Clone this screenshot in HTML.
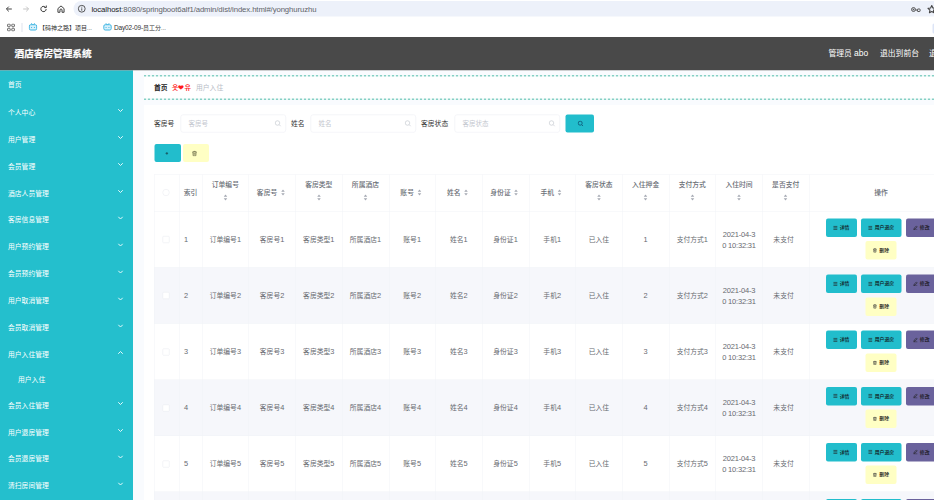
<!DOCTYPE html>
<html lang="zh-CN">
<head>
<meta charset="utf-8">
<title>酒店客房管理系统</title>
<style>
*{box-sizing:border-box;margin:0;padding:0}
html,body{width:934px;height:500px;overflow:hidden;background:#fff}
body{font-family:"Liberation Sans","Noto Sans CJK SC",sans-serif;color:#333}
#stage{position:absolute;left:0;top:0;width:1868px;height:1000px;transform:scale(.5);transform-origin:0 0;overflow:hidden;background:#fff}
.abs{position:absolute}
#pill{left:147px;top:2px;width:1800px;height:30.800px;border-radius:16px;background:#edf1fa}
#url{left:183px;top:4px;font-size:15.5px;line-height:28px;color:#5f6368;letter-spacing:-.2px;white-space:nowrap}
#url b{font-weight:normal;color:#202124}
.bm{font-size:12px;line-height:20px;color:#333;white-space:nowrap}
#hdr{left:0;top:73.600px;width:1868px;height:67.700px;background:#494949}
#title{left:29px;top:0;line-height:67.500px;font-size:19.3px;font-weight:bold;-webkit-text-stroke:.45px #fff;color:#fff;white-space:nowrap}
.hr{top:0;line-height:66.500px;font-size:15.6px;color:#fff;white-space:nowrap}
#side{left:0;top:141.300px;width:266px;height:860px;background:#24bfcd}
.mi{position:absolute;left:16px;font-size:13.6px;line-height:20px;color:#fff;white-space:nowrap}
.ar{position:absolute;left:235px;width:12px;height:8px}
#main{left:266px;top:141.300px;width:1602px;height:860px;background:#f9fbfe}
#card{left:288px;top:210px;width:1580px;height:800px;background:#fff}
#crumb{left:288px;top:150.300px;width:1580px;height:49.500px;background:#fff}
.dash{left:288px;width:1580px;height:2.600px;background:repeating-linear-gradient(90deg,#86d0c5 0,#86d0c5 3.500px,#e9f7f5 4.500px,#e9f7f5 7px,#86d0c5 8px)}
.bc{top:166px;font-size:13.6px;line-height:18px;white-space:nowrap}
.lbl{top:236px;font-size:13.6px;line-height:22px;color:#333;white-space:nowrap}
.inp{top:229px;height:36px;border:1px solid #eaecf2;border-radius:5px;background:#fff}
.inp span{position:absolute;left:15px;top:7px;font-size:13px;line-height:20px;color:#c4c7cf;white-space:nowrap}
.inp svg{position:absolute;right:8.500px;top:10px}
.btn{border-radius:4px;text-align:center;font-size:9.7px;font-weight:500;color:#111;white-space:nowrap}
.ic{display:inline-block;vertical-align:-2.300px;margin-right:4px;line-height:0}
.ic svg{display:block}
.th{font-size:13.6px;font-weight:500;color:#6a6e76;line-height:22px;text-align:center;white-space:nowrap}
.td i{font-style:normal;font-size:14.800px;line-height:1}
.td{font-size:13.6px;color:#676a70;line-height:22px;text-align:center;white-space:nowrap}
#vlx{} .vl{width:1px;background:#f1f3f7;top:349px;height:660px}
.hl{height:1px;background:#f1f3f7;left:308px;width:1560px}
.cb{width:14px;height:14px;border:1px solid #e6e8ee;border-radius:2px;background:#fff}
.cr{width:10px;height:16px}
</style>
</head>
<body>
<div id="stage">
  <div id="pill" class="abs"></div>
  <div id="url" class="abs"><b>localhost</b>:8080/springboot6alf1/admin/dist/index.html#/yonghuruzhu</div>
  <svg class="abs" style="left:10px;top:10px" width="16" height="16" viewBox="0 0 20 20" fill="none" stroke="#3c3c3c" stroke-width="2.400"><path d="M17 10H4M9.500 4L3.500 10l6 6"/></svg>
  <svg class="abs" style="left:44px;top:10px" width="16" height="16" viewBox="0 0 20 20" fill="none" stroke="#c2c2c2" stroke-width="2.400"><path d="M3 10h13M10.500 4l6 6-6 6"/></svg>
  <svg class="abs" style="left:78px;top:9px" width="18" height="18" viewBox="0 0 22 22" fill="none" stroke="#3c3c3c" stroke-width="2.400"><path d="M17.500 11a6.500 6.500 0 1 1-2-4.700"/><path d="M17.800 2.500v5h-5"/></svg>
  <svg class="abs" style="left:113px;top:9px" width="18" height="18" viewBox="0 0 22 22" fill="none" stroke="#3c3c3c" stroke-width="2.400"><path d="M3.500 10l7.500-6.500 7.500 6.500v9h-5v-5.500a2.500 2.500 0 0 0-5 0V19h-5z"/></svg>
  <svg class="abs" style="left:155px;top:9px" width="17" height="17" viewBox="0 0 20 20" fill="none" stroke="#3c3c3c" stroke-width="2"><circle cx="10" cy="10" r="8"/><path d="M10 9v5.500M10 5.300v1.900"/></svg>
  <svg class="abs" style="left:1822px;top:12px" width="20" height="14" viewBox="0 0 20 14" fill="none" stroke="#444" stroke-width="1.800"><circle cx="5" cy="7" r="3.900"/><circle cx="5" cy="7" r=".9" fill="#444"/><path d="M9 8h4"/><rect x="12.800" y="6" width="5.400" height="5" rx="1.200"/></svg>
  <svg class="abs" style="left:1853px;top:8px" width="21" height="21" viewBox="0 0 24 24" fill="none" stroke="#444" stroke-width="2.500" stroke-linejoin="round"><path d="M12 3.500l2.600 5.500 6 .8-4.400 4.200 1.100 6L12 17.100 6.700 20l1.100-6L3.400 9.800l6-.8z"/></svg>
  <div class="abs" style="left:1865px;top:47px;width:4px;height:20px;background:#dde5f7;border-radius:3px 0 0 3px"></div>
  <svg class="abs" style="left:14px;top:46.500px" width="16" height="16" viewBox="0 0 16 16" fill="none" stroke="#4a4a4a" stroke-width="1.700"><rect x="1.200" y="1.200" width="5.200" height="5.200" rx="1.300"/><rect x="9.600" y="1.200" width="5.200" height="5.200" rx="1.300"/><rect x="1.200" y="9.600" width="5.200" height="5.200" rx="1.300"/><rect x="9.600" y="9.600" width="5.200" height="5.200" rx="1.300"/></svg>
  <div class="abs" style="left:43px;top:46px;width:1.500px;height:18px;background:#dfe3ee"></div>
  <svg class="abs" style="left:57px;top:45px" width="18" height="17" viewBox="0 0 22 20" fill="#d8f1fb" stroke="#3db4e2" stroke-width="2.400"><rect x="2" y="5" width="18" height="13" rx="3.500"/><path d="M7 1.500l2.500 3M15 1.500l-2.500 3M7.500 10.500v2.500M14.500 10.500v2.500" fill="none"/></svg>
  <div class="abs bm" style="left:78px;top:45px">【码神之路】项目...</div>
  <svg class="abs" style="left:206px;top:45px" width="18" height="17" viewBox="0 0 22 20" fill="#d8f1fb" stroke="#3db4e2" stroke-width="2.400"><rect x="2" y="5" width="18" height="13" rx="3.500"/><path d="M7 1.500l2.500 3M15 1.500l-2.500 3M7.500 10.500v2.500M14.500 10.500v2.500" fill="none"/></svg>
  <div class="abs bm" style="left:228px;top:45px"><span style="font-size:13px;letter-spacing:-.3px">Day02-09-</span>员工分...</div>
  <div id="hdr" class="abs">
    <div id="title" class="abs">酒店客房管理系统</div>
    <div class="abs hr" style="left:1657px">管理员 <span style="font-size:17px">abo</span></div>
    <div class="abs hr" style="left:1760px">退出到前台</div>
    <div class="abs hr" style="left:1858px">退出登录</div>
  </div>
  <div id="main" class="abs"></div>
  <div id="card" class="abs"></div>
  <div id="side" class="abs">
    <div class="mi" style="top:18.9px">首页</div>
    <div class="mi" style="top:74.0px">个人中心</div>
    <svg class="ar" style="top:76.0px" viewBox="0 0 12 8" fill="none" stroke="#e4f9fb" stroke-width="2"><path d="M1.500 1.500l4.500 4.500 4.500-4.500"/></svg>
    <div class="mi" style="top:127.8px">用户管理</div>
    <svg class="ar" style="top:129.8px" viewBox="0 0 12 8" fill="none" stroke="#e4f9fb" stroke-width="2"><path d="M1.500 1.500l4.500 4.500 4.500-4.500"/></svg>
    <div class="mi" style="top:181.6px">会员管理</div>
    <svg class="ar" style="top:183.6px" viewBox="0 0 12 8" fill="none" stroke="#e4f9fb" stroke-width="2"><path d="M1.500 1.500l4.500 4.500 4.500-4.500"/></svg>
    <div class="mi" style="top:235.4px">酒店人员管理</div>
    <svg class="ar" style="top:237.4px" viewBox="0 0 12 8" fill="none" stroke="#e4f9fb" stroke-width="2"><path d="M1.500 1.500l4.500 4.500 4.500-4.500"/></svg>
    <div class="mi" style="top:289.2px">客房信息管理</div>
    <svg class="ar" style="top:291.2px" viewBox="0 0 12 8" fill="none" stroke="#e4f9fb" stroke-width="2"><path d="M1.500 1.500l4.500 4.500 4.500-4.500"/></svg>
    <div class="mi" style="top:343.0px">用户预约管理</div>
    <svg class="ar" style="top:345.0px" viewBox="0 0 12 8" fill="none" stroke="#e4f9fb" stroke-width="2"><path d="M1.500 1.500l4.500 4.500 4.500-4.500"/></svg>
    <div class="mi" style="top:396.8px">会员预约管理</div>
    <svg class="ar" style="top:398.8px" viewBox="0 0 12 8" fill="none" stroke="#e4f9fb" stroke-width="2"><path d="M1.500 1.500l4.500 4.500 4.500-4.500"/></svg>
    <div class="mi" style="top:450.6px">用户取消管理</div>
    <svg class="ar" style="top:452.6px" viewBox="0 0 12 8" fill="none" stroke="#e4f9fb" stroke-width="2"><path d="M1.500 1.500l4.500 4.500 4.500-4.500"/></svg>
    <div class="mi" style="top:504.4px">会员取消管理</div>
    <svg class="ar" style="top:506.4px" viewBox="0 0 12 8" fill="none" stroke="#e4f9fb" stroke-width="2"><path d="M1.500 1.500l4.500 4.500 4.500-4.500"/></svg>
    <div class="mi" style="top:558.2px">用户入住管理</div>
    <svg class="ar" style="top:560.2px" viewBox="0 0 12 8" fill="none" stroke="#e4f9fb" stroke-width="2"><path d="M1.500 6.500l4.500-4.500 4.500 4.500"/></svg>
    <div class="mi" style="top:659.7px">会员入住管理</div>
    <svg class="ar" style="top:661.7px" viewBox="0 0 12 8" fill="none" stroke="#e4f9fb" stroke-width="2"><path d="M1.500 1.500l4.500 4.500 4.500-4.500"/></svg>
    <div class="mi" style="top:713.4px">用户退房管理</div>
    <svg class="ar" style="top:715.4px" viewBox="0 0 12 8" fill="none" stroke="#e4f9fb" stroke-width="2"><path d="M1.500 1.500l4.500 4.500 4.500-4.500"/></svg>
    <div class="mi" style="top:767.1px">会员退房管理</div>
    <svg class="ar" style="top:769.1px" viewBox="0 0 12 8" fill="none" stroke="#e4f9fb" stroke-width="2"><path d="M1.500 1.500l4.500 4.500 4.500-4.500"/></svg>
    <div class="mi" style="top:820.8px">清扫房间管理</div>
    <svg class="ar" style="top:822.8px" viewBox="0 0 12 8" fill="none" stroke="#e4f9fb" stroke-width="2"><path d="M1.500 1.500l4.500 4.500 4.500-4.500"/></svg>
    <div class="mi" style="left:36px;top:607.3px">用户入住</div>
  </div>
  <div id="crumb" class="abs"></div>
  <div class="abs dash" style="top:150.300px"></div>
  <div class="abs dash" style="top:197.200px"></div>
  <div class="abs bc" style="left:308px;color:#222;font-weight:bold">首页</div>
  <div class="abs bc" style="left:344px;color:#ff1a1a;font-family:'Liberation Sans','NanumGothic','Noto Sans CJK KR',sans-serif;font-weight:bold">웃❤유</div>
  <div class="abs bc" style="left:392px;color:#b8bcc6">用户入住</div>
  <div class="abs lbl" style="left:308px">客房号</div>
  <div class="abs inp" style="left:361px;width:211px"><span>客房号</span><svg width="14" height="14" viewBox="0 0 14 14" fill="none" stroke="#c0c4cc" stroke-width="1.200"><circle cx="6" cy="6" r="4.500"/><path d="M9.500 9.500l3 3"/></svg></div>
  <div class="abs lbl" style="left:582px">姓名</div>
  <div class="abs inp" style="left:621px;width:211px"><span>姓名</span><svg width="14" height="14" viewBox="0 0 14 14" fill="none" stroke="#c0c4cc" stroke-width="1.200"><circle cx="6" cy="6" r="4.500"/><path d="M9.500 9.500l3 3"/></svg></div>
  <div class="abs lbl" style="left:842px">客房状态</div>
  <div class="abs inp" style="left:909px;width:211px"><span>客房状态</span><svg width="14" height="14" viewBox="0 0 14 14" fill="none" stroke="#c0c4cc" stroke-width="1.200"><circle cx="6" cy="6" r="4.500"/><path d="M9.500 9.500l3 3"/></svg></div>
  <div class="abs btn" style="left:1131px;top:229px;width:57px;height:36px;background:#22bdcc"><div class="abs" style="left:23.500px;top:11.500px"><svg width="12.500" height="12.500" viewBox="0 0 14 14" fill="none" stroke="#0f5878" stroke-width="1.900"><circle cx="6" cy="6" r="4.500"/><path d="M9.500 9.500l3 3"/></svg></div></div>
  <div class="abs btn" style="left:309px;top:288px;width:53px;height:36px;background:#22bdcc"><svg class="abs" style="left:20.500px;top:15px" width="7.500" height="7.500" viewBox="0 0 10 10" stroke="#17525a" stroke-width="2.200"><path d="M5 1.500v7M1.500 5h7"/></svg></div>
  <div class="abs btn" style="left:366px;top:288px;width:52px;height:36px;background:#ffffc4"><div class="abs" style="left:16.500px;top:13px"><svg width="12" height="12" viewBox="0 0 12 12" fill="none" stroke="#5c5c3a" stroke-width="1.300"><path d="M1.500 3h9M4.500 3V1.500h3V3M2.800 3l.5 7.500h5.400l.5-7.500M5 5v3.500M7 5v3.500"/></svg></div></div>
  <div class="abs" style="left:308px;top:535.2px;width:1560px;height:112.2px;background:#f6f7fb"></div>
  <div class="abs" style="left:308px;top:759.6px;width:1560px;height:112.2px;background:#f6f7fb"></div>
  <div class="abs" style="left:308px;top:984.0px;width:1560px;height:112.2px;background:#f6f7fb"></div>
  <div class="abs hl" style="top:349px"></div>
  <div class="abs hl" style="top:422.0px"></div>
  <div class="abs hl" style="top:534.2px"></div>
  <div class="abs hl" style="top:646.4px"></div>
  <div class="abs hl" style="top:758.6px"></div>
  <div class="abs hl" style="top:870.8px"></div>
  <div class="abs hl" style="top:983.0px"></div>
  <div class="abs hl" style="top:1095.2px"></div>
  <div class="abs vl" style="left:308.0px"></div>
  <div class="abs vl" style="left:358.0px"></div>
  <div class="abs vl" style="left:404.0px"></div>
  <div class="abs vl" style="left:497.4px"></div>
  <div class="abs vl" style="left:590.8px"></div>
  <div class="abs vl" style="left:684.2px"></div>
  <div class="abs vl" style="left:777.6px"></div>
  <div class="abs vl" style="left:871.0px"></div>
  <div class="abs vl" style="left:964.3px"></div>
  <div class="abs vl" style="left:1057.7px"></div>
  <div class="abs vl" style="left:1151.1px"></div>
  <div class="abs vl" style="left:1244.5px"></div>
  <div class="abs vl" style="left:1337.9px"></div>
  <div class="abs vl" style="left:1431.3px"></div>
  <div class="abs vl" style="left:1524.7px"></div>
  <div class="abs vl" style="left:1618.1px"></div>
  <div class="abs cb" style="left:325px;top:378px;border-radius:7px"></div>
  <div class="abs th" style="left:358px;width:46px;top:374.500px">索引</div>
  <div class="abs th" style="left:404px;width:93.4px;top:359px">订单编号</div>
  <div class="abs" style="left:445.7px;top:387px"><svg class="cr" viewBox="0 0 10 16" style="display:block"><path d="M5 2l3.500 4.500h-7z" fill="#a4a8b2"/><path d="M5 14l3.500-4.500h-7z" fill="#a4a8b2"/></svg></div>
  <div class="abs th" style="left:494.4px;width:93.4px;top:374px">客房号<span style="display:inline-block;width:14px"></span></div>
  <div class="abs" style="left:560.5px;top:377px"><svg class="cr" viewBox="0 0 10 16" style="display:block"><path d="M5 2l3.500 4.500h-7z" fill="#a4a8b2"/><path d="M5 14l3.500-4.500h-7z" fill="#a4a8b2"/></svg></div>
  <div class="abs th" style="left:590.8px;width:93.4px;top:359px">客房类型</div>
  <div class="abs" style="left:632.5px;top:387px"><svg class="cr" viewBox="0 0 10 16" style="display:block"><path d="M5 2l3.500 4.500h-7z" fill="#a4a8b2"/><path d="M5 14l3.500-4.500h-7z" fill="#a4a8b2"/></svg></div>
  <div class="abs th" style="left:684.2px;width:93.4px;top:359px">所属酒店</div>
  <div class="abs" style="left:725.9px;top:387px"><svg class="cr" viewBox="0 0 10 16" style="display:block"><path d="M5 2l3.500 4.500h-7z" fill="#a4a8b2"/><path d="M5 14l3.500-4.500h-7z" fill="#a4a8b2"/></svg></div>
  <div class="abs th" style="left:774.6px;width:93.4px;top:374px">账号<span style="display:inline-block;width:14px"></span></div>
  <div class="abs" style="left:833.9px;top:377px"><svg class="cr" viewBox="0 0 10 16" style="display:block"><path d="M5 2l3.500 4.500h-7z" fill="#a4a8b2"/><path d="M5 14l3.500-4.500h-7z" fill="#a4a8b2"/></svg></div>
  <div class="abs th" style="left:868.0px;width:93.4px;top:374px">姓名<span style="display:inline-block;width:14px"></span></div>
  <div class="abs" style="left:927.3px;top:377px"><svg class="cr" viewBox="0 0 10 16" style="display:block"><path d="M5 2l3.500 4.500h-7z" fill="#a4a8b2"/><path d="M5 14l3.500-4.500h-7z" fill="#a4a8b2"/></svg></div>
  <div class="abs th" style="left:961.3px;width:93.4px;top:374px">身份证<span style="display:inline-block;width:14px"></span></div>
  <div class="abs" style="left:1027.4px;top:377px"><svg class="cr" viewBox="0 0 10 16" style="display:block"><path d="M5 2l3.500 4.500h-7z" fill="#a4a8b2"/><path d="M5 14l3.500-4.500h-7z" fill="#a4a8b2"/></svg></div>
  <div class="abs th" style="left:1054.7px;width:93.4px;top:374px">手机<span style="display:inline-block;width:14px"></span></div>
  <div class="abs" style="left:1114.0px;top:377px"><svg class="cr" viewBox="0 0 10 16" style="display:block"><path d="M5 2l3.500 4.500h-7z" fill="#a4a8b2"/><path d="M5 14l3.500-4.500h-7z" fill="#a4a8b2"/></svg></div>
  <div class="abs th" style="left:1151.1px;width:93.4px;top:359px">客房状态</div>
  <div class="abs" style="left:1192.8px;top:387px"><svg class="cr" viewBox="0 0 10 16" style="display:block"><path d="M5 2l3.500 4.500h-7z" fill="#a4a8b2"/><path d="M5 14l3.500-4.500h-7z" fill="#a4a8b2"/></svg></div>
  <div class="abs th" style="left:1244.5px;width:93.4px;top:359px">入住押金</div>
  <div class="abs" style="left:1286.2px;top:387px"><svg class="cr" viewBox="0 0 10 16" style="display:block"><path d="M5 2l3.500 4.500h-7z" fill="#a4a8b2"/><path d="M5 14l3.500-4.500h-7z" fill="#a4a8b2"/></svg></div>
  <div class="abs th" style="left:1337.9px;width:93.4px;top:359px">支付方式</div>
  <div class="abs" style="left:1379.6px;top:387px"><svg class="cr" viewBox="0 0 10 16" style="display:block"><path d="M5 2l3.500 4.500h-7z" fill="#a4a8b2"/><path d="M5 14l3.500-4.500h-7z" fill="#a4a8b2"/></svg></div>
  <div class="abs th" style="left:1431.3px;width:93.4px;top:359px">入住时间</div>
  <div class="abs" style="left:1473.0px;top:387px"><svg class="cr" viewBox="0 0 10 16" style="display:block"><path d="M5 2l3.500 4.500h-7z" fill="#a4a8b2"/><path d="M5 14l3.500-4.500h-7z" fill="#a4a8b2"/></svg></div>
  <div class="abs th" style="left:1524.7px;width:93.4px;top:359px">是否支付</div>
  <div class="abs" style="left:1566.4px;top:387px"><svg class="cr" viewBox="0 0 10 16" style="display:block"><path d="M5 2l3.500 4.500h-7z" fill="#a4a8b2"/><path d="M5 14l3.500-4.500h-7z" fill="#a4a8b2"/></svg></div>
  <div class="abs th" style="left:1618px;width:288px;top:374.500px">操作</div>
  <div class="abs cb" style="left:325px;top:472.1px"></div>
  <div class="abs td" style="left:358px;width:46px;top:468.1px;text-align:left;padding-left:10px"><i>1</i></div>
  <div class="abs td" style="left:404px;width:93.400px;top:468.1px">订单编号<i>1</i></div>
  <div class="abs td" style="left:497.4px;width:93.400px;top:468.1px">客房号<i>1</i></div>
  <div class="abs td" style="left:590.8px;width:93.400px;top:468.1px">客房类型<i>1</i></div>
  <div class="abs td" style="left:684.2px;width:93.400px;top:468.1px">所属酒店<i>1</i></div>
  <div class="abs td" style="left:777.6px;width:93.400px;top:468.1px">账号<i>1</i></div>
  <div class="abs td" style="left:871.0px;width:93.400px;top:468.1px">姓名<i>1</i></div>
  <div class="abs td" style="left:964.3px;width:93.400px;top:468.1px">身份证<i>1</i></div>
  <div class="abs td" style="left:1057.7px;width:93.400px;top:468.1px">手机<i>1</i></div>
  <div class="abs td" style="left:1151.1px;width:93.400px;top:468.1px">已入住</div>
  <div class="abs td" style="left:1244.5px;width:93.400px;top:468.1px"><i>1</i></div>
  <div class="abs td" style="left:1337.9px;width:93.400px;top:468.1px">支付方式<i>1</i></div>
  <div class="abs td" style="left:1431.3px;width:93.400px;top:457.0px;line-height:21.800px;font-size:15px;letter-spacing:-.35px">2021-04-3<br>0 10:32:31</div>
  <div class="abs td" style="left:1524.7px;width:93.400px;top:468.1px;text-align:left;padding-left:22px">未支付</div>
  <div class="abs btn" style="left:1651.5px;top:436.9px;width:62px;height:37px;background:#22bdcc;line-height:35.600px"><span class="ic"><svg width="9.500" height="9.500" viewBox="0 0 11 11" fill="none" stroke="#222" stroke-width="1.500"><path d="M1 2h9M1 5.500h9M1 9h9"/></svg></span>详情</div>
  <div class="abs btn" style="left:1721.6px;top:436.9px;width:81px;height:37px;background:#22bdcc;line-height:35.600px"><span class="ic"><svg width="9.500" height="9.500" viewBox="0 0 11 11" fill="none" stroke="#222" stroke-width="1.500"><path d="M1 2h9M1 5.500h9M1 9h9"/></svg></span>用户退房</div>
  <div class="abs btn" style="left:1811.6px;top:436.9px;width:62px;height:37px;background:#6a629c;line-height:35.600px"><span class="ic"><svg width="9.500" height="9.500" viewBox="0 0 11 11" fill="none" stroke="#222" stroke-width="1.400"><path d="M2 9l.6-2.600L7.800 1.200l2 2L4.600 8.400zM1 10.300h9"/></svg></span>修改</div>
  <div class="abs btn" style="left:1730.6px;top:482.4px;width:62px;height:37px;background:#ffffc4;line-height:35.600px"><span class="ic"><svg width="9.500" height="9.500" viewBox="0 0 12 12" fill="none" stroke="#333" stroke-width="1.300"><path d="M1.500 3h9M4.500 3V1.500h3V3M2.800 3l.5 7.500h5.400l.5-7.500M5 5v3.500M7 5v3.500"/></svg></span>删除</div>
  <div class="abs cb" style="left:325px;top:584.3px"></div>
  <div class="abs td" style="left:358px;width:46px;top:580.3px;text-align:left;padding-left:10px"><i>2</i></div>
  <div class="abs td" style="left:404px;width:93.400px;top:580.3px">订单编号<i>2</i></div>
  <div class="abs td" style="left:497.4px;width:93.400px;top:580.3px">客房号<i>2</i></div>
  <div class="abs td" style="left:590.8px;width:93.400px;top:580.3px">客房类型<i>2</i></div>
  <div class="abs td" style="left:684.2px;width:93.400px;top:580.3px">所属酒店<i>2</i></div>
  <div class="abs td" style="left:777.6px;width:93.400px;top:580.3px">账号<i>2</i></div>
  <div class="abs td" style="left:871.0px;width:93.400px;top:580.3px">姓名<i>2</i></div>
  <div class="abs td" style="left:964.3px;width:93.400px;top:580.3px">身份证<i>2</i></div>
  <div class="abs td" style="left:1057.7px;width:93.400px;top:580.3px">手机<i>2</i></div>
  <div class="abs td" style="left:1151.1px;width:93.400px;top:580.3px">已入住</div>
  <div class="abs td" style="left:1244.5px;width:93.400px;top:580.3px"><i>2</i></div>
  <div class="abs td" style="left:1337.9px;width:93.400px;top:580.3px">支付方式<i>2</i></div>
  <div class="abs td" style="left:1431.3px;width:93.400px;top:569.2px;line-height:21.800px;font-size:15px;letter-spacing:-.35px">2021-04-3<br>0 10:32:31</div>
  <div class="abs td" style="left:1524.7px;width:93.400px;top:580.3px;text-align:left;padding-left:22px">未支付</div>
  <div class="abs btn" style="left:1651.5px;top:549.1px;width:62px;height:37px;background:#22bdcc;line-height:35.600px"><span class="ic"><svg width="9.500" height="9.500" viewBox="0 0 11 11" fill="none" stroke="#222" stroke-width="1.500"><path d="M1 2h9M1 5.500h9M1 9h9"/></svg></span>详情</div>
  <div class="abs btn" style="left:1721.6px;top:549.1px;width:81px;height:37px;background:#22bdcc;line-height:35.600px"><span class="ic"><svg width="9.500" height="9.500" viewBox="0 0 11 11" fill="none" stroke="#222" stroke-width="1.500"><path d="M1 2h9M1 5.500h9M1 9h9"/></svg></span>用户退房</div>
  <div class="abs btn" style="left:1811.6px;top:549.1px;width:62px;height:37px;background:#6a629c;line-height:35.600px"><span class="ic"><svg width="9.500" height="9.500" viewBox="0 0 11 11" fill="none" stroke="#222" stroke-width="1.400"><path d="M2 9l.6-2.600L7.800 1.200l2 2L4.600 8.400zM1 10.300h9"/></svg></span>修改</div>
  <div class="abs btn" style="left:1730.6px;top:594.6px;width:62px;height:37px;background:#ffffc4;line-height:35.600px"><span class="ic"><svg width="9.500" height="9.500" viewBox="0 0 12 12" fill="none" stroke="#333" stroke-width="1.300"><path d="M1.500 3h9M4.500 3V1.500h3V3M2.800 3l.5 7.500h5.400l.5-7.500M5 5v3.500M7 5v3.500"/></svg></span>删除</div>
  <div class="abs cb" style="left:325px;top:696.5px"></div>
  <div class="abs td" style="left:358px;width:46px;top:692.5px;text-align:left;padding-left:10px"><i>3</i></div>
  <div class="abs td" style="left:404px;width:93.400px;top:692.5px">订单编号<i>3</i></div>
  <div class="abs td" style="left:497.4px;width:93.400px;top:692.5px">客房号<i>3</i></div>
  <div class="abs td" style="left:590.8px;width:93.400px;top:692.5px">客房类型<i>3</i></div>
  <div class="abs td" style="left:684.2px;width:93.400px;top:692.5px">所属酒店<i>3</i></div>
  <div class="abs td" style="left:777.6px;width:93.400px;top:692.5px">账号<i>3</i></div>
  <div class="abs td" style="left:871.0px;width:93.400px;top:692.5px">姓名<i>3</i></div>
  <div class="abs td" style="left:964.3px;width:93.400px;top:692.5px">身份证<i>3</i></div>
  <div class="abs td" style="left:1057.7px;width:93.400px;top:692.5px">手机<i>3</i></div>
  <div class="abs td" style="left:1151.1px;width:93.400px;top:692.5px">已入住</div>
  <div class="abs td" style="left:1244.5px;width:93.400px;top:692.5px"><i>3</i></div>
  <div class="abs td" style="left:1337.9px;width:93.400px;top:692.5px">支付方式<i>3</i></div>
  <div class="abs td" style="left:1431.3px;width:93.400px;top:681.4px;line-height:21.800px;font-size:15px;letter-spacing:-.35px">2021-04-3<br>0 10:32:31</div>
  <div class="abs td" style="left:1524.7px;width:93.400px;top:692.5px;text-align:left;padding-left:22px">未支付</div>
  <div class="abs btn" style="left:1651.5px;top:661.3px;width:62px;height:37px;background:#22bdcc;line-height:35.600px"><span class="ic"><svg width="9.500" height="9.500" viewBox="0 0 11 11" fill="none" stroke="#222" stroke-width="1.500"><path d="M1 2h9M1 5.500h9M1 9h9"/></svg></span>详情</div>
  <div class="abs btn" style="left:1721.6px;top:661.3px;width:81px;height:37px;background:#22bdcc;line-height:35.600px"><span class="ic"><svg width="9.500" height="9.500" viewBox="0 0 11 11" fill="none" stroke="#222" stroke-width="1.500"><path d="M1 2h9M1 5.500h9M1 9h9"/></svg></span>用户退房</div>
  <div class="abs btn" style="left:1811.6px;top:661.3px;width:62px;height:37px;background:#6a629c;line-height:35.600px"><span class="ic"><svg width="9.500" height="9.500" viewBox="0 0 11 11" fill="none" stroke="#222" stroke-width="1.400"><path d="M2 9l.6-2.600L7.800 1.200l2 2L4.600 8.400zM1 10.300h9"/></svg></span>修改</div>
  <div class="abs btn" style="left:1730.6px;top:706.8px;width:62px;height:37px;background:#ffffc4;line-height:35.600px"><span class="ic"><svg width="9.500" height="9.500" viewBox="0 0 12 12" fill="none" stroke="#333" stroke-width="1.300"><path d="M1.500 3h9M4.500 3V1.500h3V3M2.800 3l.5 7.500h5.400l.5-7.500M5 5v3.500M7 5v3.500"/></svg></span>删除</div>
  <div class="abs cb" style="left:325px;top:808.7px"></div>
  <div class="abs td" style="left:358px;width:46px;top:804.7px;text-align:left;padding-left:10px"><i>4</i></div>
  <div class="abs td" style="left:404px;width:93.400px;top:804.7px">订单编号<i>4</i></div>
  <div class="abs td" style="left:497.4px;width:93.400px;top:804.7px">客房号<i>4</i></div>
  <div class="abs td" style="left:590.8px;width:93.400px;top:804.7px">客房类型<i>4</i></div>
  <div class="abs td" style="left:684.2px;width:93.400px;top:804.7px">所属酒店<i>4</i></div>
  <div class="abs td" style="left:777.6px;width:93.400px;top:804.7px">账号<i>4</i></div>
  <div class="abs td" style="left:871.0px;width:93.400px;top:804.7px">姓名<i>4</i></div>
  <div class="abs td" style="left:964.3px;width:93.400px;top:804.7px">身份证<i>4</i></div>
  <div class="abs td" style="left:1057.7px;width:93.400px;top:804.7px">手机<i>4</i></div>
  <div class="abs td" style="left:1151.1px;width:93.400px;top:804.7px">已入住</div>
  <div class="abs td" style="left:1244.5px;width:93.400px;top:804.7px"><i>4</i></div>
  <div class="abs td" style="left:1337.9px;width:93.400px;top:804.7px">支付方式<i>4</i></div>
  <div class="abs td" style="left:1431.3px;width:93.400px;top:793.6px;line-height:21.800px;font-size:15px;letter-spacing:-.35px">2021-04-3<br>0 10:32:31</div>
  <div class="abs td" style="left:1524.7px;width:93.400px;top:804.7px;text-align:left;padding-left:22px">未支付</div>
  <div class="abs btn" style="left:1651.5px;top:773.5px;width:62px;height:37px;background:#22bdcc;line-height:35.600px"><span class="ic"><svg width="9.500" height="9.500" viewBox="0 0 11 11" fill="none" stroke="#222" stroke-width="1.500"><path d="M1 2h9M1 5.500h9M1 9h9"/></svg></span>详情</div>
  <div class="abs btn" style="left:1721.6px;top:773.5px;width:81px;height:37px;background:#22bdcc;line-height:35.600px"><span class="ic"><svg width="9.500" height="9.500" viewBox="0 0 11 11" fill="none" stroke="#222" stroke-width="1.500"><path d="M1 2h9M1 5.500h9M1 9h9"/></svg></span>用户退房</div>
  <div class="abs btn" style="left:1811.6px;top:773.5px;width:62px;height:37px;background:#6a629c;line-height:35.600px"><span class="ic"><svg width="9.500" height="9.500" viewBox="0 0 11 11" fill="none" stroke="#222" stroke-width="1.400"><path d="M2 9l.6-2.600L7.800 1.200l2 2L4.600 8.400zM1 10.300h9"/></svg></span>修改</div>
  <div class="abs btn" style="left:1730.6px;top:819.0px;width:62px;height:37px;background:#ffffc4;line-height:35.600px"><span class="ic"><svg width="9.500" height="9.500" viewBox="0 0 12 12" fill="none" stroke="#333" stroke-width="1.300"><path d="M1.500 3h9M4.500 3V1.500h3V3M2.800 3l.5 7.500h5.400l.5-7.500M5 5v3.500M7 5v3.500"/></svg></span>删除</div>
  <div class="abs cb" style="left:325px;top:920.9px"></div>
  <div class="abs td" style="left:358px;width:46px;top:916.9px;text-align:left;padding-left:10px"><i>5</i></div>
  <div class="abs td" style="left:404px;width:93.400px;top:916.9px">订单编号<i>5</i></div>
  <div class="abs td" style="left:497.4px;width:93.400px;top:916.9px">客房号<i>5</i></div>
  <div class="abs td" style="left:590.8px;width:93.400px;top:916.9px">客房类型<i>5</i></div>
  <div class="abs td" style="left:684.2px;width:93.400px;top:916.9px">所属酒店<i>5</i></div>
  <div class="abs td" style="left:777.6px;width:93.400px;top:916.9px">账号<i>5</i></div>
  <div class="abs td" style="left:871.0px;width:93.400px;top:916.9px">姓名<i>5</i></div>
  <div class="abs td" style="left:964.3px;width:93.400px;top:916.9px">身份证<i>5</i></div>
  <div class="abs td" style="left:1057.7px;width:93.400px;top:916.9px">手机<i>5</i></div>
  <div class="abs td" style="left:1151.1px;width:93.400px;top:916.9px">已入住</div>
  <div class="abs td" style="left:1244.5px;width:93.400px;top:916.9px"><i>5</i></div>
  <div class="abs td" style="left:1337.9px;width:93.400px;top:916.9px">支付方式<i>5</i></div>
  <div class="abs td" style="left:1431.3px;width:93.400px;top:905.8px;line-height:21.800px;font-size:15px;letter-spacing:-.35px">2021-04-3<br>0 10:32:31</div>
  <div class="abs td" style="left:1524.7px;width:93.400px;top:916.9px;text-align:left;padding-left:22px">未支付</div>
  <div class="abs btn" style="left:1651.5px;top:885.7px;width:62px;height:37px;background:#22bdcc;line-height:35.600px"><span class="ic"><svg width="9.500" height="9.500" viewBox="0 0 11 11" fill="none" stroke="#222" stroke-width="1.500"><path d="M1 2h9M1 5.500h9M1 9h9"/></svg></span>详情</div>
  <div class="abs btn" style="left:1721.6px;top:885.7px;width:81px;height:37px;background:#22bdcc;line-height:35.600px"><span class="ic"><svg width="9.500" height="9.500" viewBox="0 0 11 11" fill="none" stroke="#222" stroke-width="1.500"><path d="M1 2h9M1 5.500h9M1 9h9"/></svg></span>用户退房</div>
  <div class="abs btn" style="left:1811.6px;top:885.7px;width:62px;height:37px;background:#6a629c;line-height:35.600px"><span class="ic"><svg width="9.500" height="9.500" viewBox="0 0 11 11" fill="none" stroke="#222" stroke-width="1.400"><path d="M2 9l.6-2.600L7.800 1.200l2 2L4.600 8.400zM1 10.300h9"/></svg></span>修改</div>
  <div class="abs btn" style="left:1730.6px;top:931.2px;width:62px;height:37px;background:#ffffc4;line-height:35.600px"><span class="ic"><svg width="9.500" height="9.500" viewBox="0 0 12 12" fill="none" stroke="#333" stroke-width="1.300"><path d="M1.500 3h9M4.500 3V1.500h3V3M2.800 3l.5 7.500h5.400l.5-7.500M5 5v3.500M7 5v3.500"/></svg></span>删除</div>
  <div class="abs cb" style="left:325px;top:1033.1px"></div>
  <div class="abs td" style="left:358px;width:46px;top:1029.1px;text-align:left;padding-left:10px"><i>6</i></div>
  <div class="abs td" style="left:404px;width:93.400px;top:1029.1px">订单编号<i>6</i></div>
  <div class="abs td" style="left:497.4px;width:93.400px;top:1029.1px">客房号<i>6</i></div>
  <div class="abs td" style="left:590.8px;width:93.400px;top:1029.1px">客房类型<i>6</i></div>
  <div class="abs td" style="left:684.2px;width:93.400px;top:1029.1px">所属酒店<i>6</i></div>
  <div class="abs td" style="left:777.6px;width:93.400px;top:1029.1px">账号<i>6</i></div>
  <div class="abs td" style="left:871.0px;width:93.400px;top:1029.1px">姓名<i>6</i></div>
  <div class="abs td" style="left:964.3px;width:93.400px;top:1029.1px">身份证<i>6</i></div>
  <div class="abs td" style="left:1057.7px;width:93.400px;top:1029.1px">手机<i>6</i></div>
  <div class="abs td" style="left:1151.1px;width:93.400px;top:1029.1px">已入住</div>
  <div class="abs td" style="left:1244.5px;width:93.400px;top:1029.1px"><i>6</i></div>
  <div class="abs td" style="left:1337.9px;width:93.400px;top:1029.1px">支付方式<i>6</i></div>
  <div class="abs td" style="left:1431.3px;width:93.400px;top:1018.0px;line-height:21.800px;font-size:15px;letter-spacing:-.35px">2021-04-3<br>0 10:32:31</div>
  <div class="abs td" style="left:1524.7px;width:93.400px;top:1029.1px;text-align:left;padding-left:22px">未支付</div>
  <div class="abs btn" style="left:1651.5px;top:997.9px;width:62px;height:37px;background:#22bdcc;line-height:35.600px"><span class="ic"><svg width="9.500" height="9.500" viewBox="0 0 11 11" fill="none" stroke="#222" stroke-width="1.500"><path d="M1 2h9M1 5.500h9M1 9h9"/></svg></span>详情</div>
  <div class="abs btn" style="left:1721.6px;top:997.9px;width:81px;height:37px;background:#22bdcc;line-height:35.600px"><span class="ic"><svg width="9.500" height="9.500" viewBox="0 0 11 11" fill="none" stroke="#222" stroke-width="1.500"><path d="M1 2h9M1 5.500h9M1 9h9"/></svg></span>用户退房</div>
  <div class="abs btn" style="left:1811.6px;top:997.9px;width:62px;height:37px;background:#6a629c;line-height:35.600px"><span class="ic"><svg width="9.500" height="9.500" viewBox="0 0 11 11" fill="none" stroke="#222" stroke-width="1.400"><path d="M2 9l.6-2.600L7.800 1.200l2 2L4.600 8.400zM1 10.300h9"/></svg></span>修改</div>
  <div class="abs btn" style="left:1730.6px;top:1043.4px;width:62px;height:37px;background:#ffffc4;line-height:35.600px"><span class="ic"><svg width="9.500" height="9.500" viewBox="0 0 12 12" fill="none" stroke="#333" stroke-width="1.300"><path d="M1.500 3h9M4.500 3V1.500h3V3M2.800 3l.5 7.500h5.400l.5-7.500M5 5v3.500M7 5v3.500"/></svg></span>删除</div>
</div>
</body>
</html>
